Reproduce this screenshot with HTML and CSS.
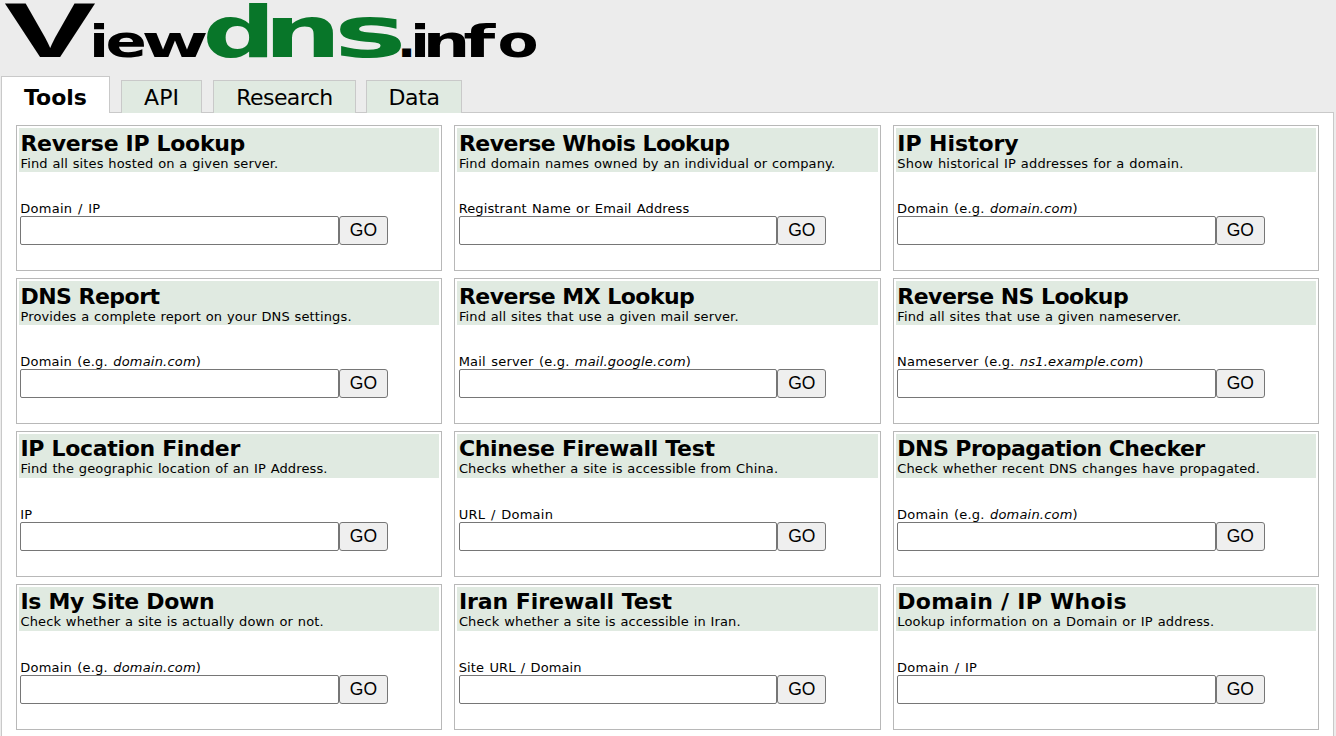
FILE: index.html
```html
<!DOCTYPE html>
<html lang="en">
<head>
<meta charset="utf-8">
<title>ViewDNS.info</title>
<link rel="stylesheet" href="styles.css">
</head>
<body>
<header class="masthead">
<svg class="logo" width="545" height="76" viewBox="0 0 545 76" role="img" aria-label="Viewdns.info">
<text class="logo-dark logo-initial" x="4" y="57" font-size="77" textLength="92" lengthAdjust="spacingAndGlyphs">V</text>
<text class="logo-dark" y="57" font-size="45"><tspan x="89.2" textLength="19.6" lengthAdjust="spacingAndGlyphs">i</tspan><tspan x="105.5" textLength="41.4" lengthAdjust="spacingAndGlyphs">e</tspan><tspan x="141.5" textLength="67" lengthAdjust="spacingAndGlyphs">w</tspan></text>
<text class="logo-green" y="57" font-size="72"><tspan x="202.4" textLength="73.2" lengthAdjust="spacingAndGlyphs">d</tspan><tspan x="263.8" textLength="77.7" lengthAdjust="spacingAndGlyphs">n</tspan><tspan x="333.7" textLength="73" lengthAdjust="spacingAndGlyphs">s</tspan></text>
<text class="logo-dark" y="57" font-size="45"><tspan x="397" textLength="19.2" lengthAdjust="spacingAndGlyphs">.</tspan><tspan x="410.2" textLength="19.6" lengthAdjust="spacingAndGlyphs">i</tspan><tspan x="422.4" textLength="47.9" lengthAdjust="spacingAndGlyphs">n</tspan><tspan x="463.3" textLength="32" lengthAdjust="spacingAndGlyphs">f</tspan><tspan x="497.4" textLength="41.1" lengthAdjust="spacingAndGlyphs">o</tspan></text>
</svg>
</header>
<nav class="tabs">
<a class="tab tab-active"><span class="tab-text">Tools</span></a>
<a class="tab tab-api"><span class="tab-text">API</span></a>
<a class="tab tab-research"><span class="tab-text">Research</span></a>
<a class="tab tab-data"><span class="tab-text">Data</span></a>
</nav>
<main class="panel">
<section class="card"><div class="head"><h2>Reverse IP Lookup</h2><p>Find all sites hosted on a given server.</p></div><form><label class="slashed">Domain / IP</label><div class="row"><input type="text"><button type="button">GO</button></div></form></section>
<section class="card"><div class="head"><h2 class="tight">Reverse Whois Lookup</h2><p>Find domain names owned by an individual or company.</p></div><form><label class="long">Registrant Name or Email Address</label><div class="row"><input type="text"><button type="button">GO</button></div></form></section>
<section class="card"><div class="head"><h2 class="normal">IP History</h2><p class="wide">Show historical IP addresses for a domain.</p></div><form><label>Domain (e.g. <i>domain.com</i>)</label><div class="row"><input type="text"><button type="button">GO</button></div></form></section>
<section class="card"><div class="head"><h2 class="tight">DNS Report</h2><p>Provides a complete report on your DNS settings.</p></div><form><label>Domain (e.g. <i>domain.com</i>)</label><div class="row"><input type="text"><button type="button">GO</button></div></form></section>
<section class="card"><div class="head"><h2 class="tight">Reverse MX Lookup</h2><p>Find all sites that use a given mail server.</p></div><form><label>Mail server (e.g. <i>mail.google.com</i>)</label><div class="row"><input type="text"><button type="button">GO</button></div></form></section>
<section class="card"><div class="head"><h2 class="tight">Reverse NS Lookup</h2><p>Find all sites that use a given nameserver.</p></div><form><label>Nameserver (e.g. <i>ns1.example.com</i>)</label><div class="row"><input type="text"><button type="button">GO</button></div></form></section>
<section class="card raised"><div class="head"><h2>IP Location Finder</h2><p>Find the geographic location of an IP Address.</p></div><form><label>IP</label><div class="row"><input type="text"><button type="button">GO</button></div></form></section>
<section class="card raised"><div class="head"><h2>Chinese Firewall Test</h2><p>Checks whether a site is accessible from China.</p></div><form><label class="slashed">URL / Domain</label><div class="row"><input type="text"><button type="button">GO</button></div></form></section>
<section class="card raised"><div class="head"><h2 class="tight">DNS Propagation Checker</h2><p>Check whether recent DNS changes have propagated.</p></div><form><label>Domain (e.g. <i>domain.com</i>)</label><div class="row"><input type="text"><button type="button">GO</button></div></form></section>
<section class="card raised"><div class="head"><h2>Is My Site Down</h2><p>Check whether a site is actually down or not.</p></div><form><label>Domain (e.g. <i>domain.com</i>)</label><div class="row"><input type="text"><button type="button">GO</button></div></form></section>
<section class="card raised"><div class="head"><h2 class="normal">Iran Firewall Test</h2><p>Check whether a site is accessible in Iran.</p></div><form><label class="long">Site URL / Domain</label><div class="row"><input type="text"><button type="button">GO</button></div></form></section>
<section class="card raised"><div class="head"><h2 class="loose">Domain / IP Whois</h2><p class="wide">Lookup information on a Domain or IP address.</p></div><form><label class="slashed">Domain / IP</label><div class="row"><input type="text"><button type="button">GO</button></div></form></section>
</main>
</body>
</html>
```
FILE: styles.css
```css
* { box-sizing: border-box; }
body {
  margin: 0;
  height: 736px;
  overflow: hidden;
  background: #ececec;
  color: #000;
  font-family: Verdana, "DejaVu Sans", sans-serif;
  font-size: 13px;
}
.masthead { height: 76px; }
.logo { display: block; overflow: visible; font-family: "DejaVu Sans", sans-serif; font-weight: bold; }
.logo-initial { font-family: "Liberation Sans", Arial, sans-serif; }
.logo-dark { fill: #000; }
.logo-green { fill: #087629; }
.tabs {
  display: flex;
  align-items: flex-end;
  height: 37px;
  margin: 0 2px 0 1px;
}
.tabs::after { content: ""; flex: 1; border-bottom: 1px solid #c9c9c9; }
.tab {
  height: 33px;
  margin-right: 11px;
  border: 1px solid #c9c9c9;
  border-bottom: 0;
  background: #e0eae1;
  font-size: 22px;
  line-height: 34px;
  text-align: center;
  white-space: nowrap;
  position: relative;
}
.tab::after {
  content: "";
  position: absolute;
  left: 100%;
  bottom: 0;
  width: 12px;
  height: 1px;
  background: #c9c9c9;
}
.tab-active { width: 109px; height: 37px; background: #fff; font-weight: bold; line-height: 41px; }
.tab-api { width: 81px; }
.tab-research { width: 143px; margin-right: 10px; letter-spacing: -0.55px; }
.tab-data { width: 96px; margin-right: 0; letter-spacing: -0.4px; }
.panel {
  display: grid;
  grid-template-columns: repeat(3, 426.15px);
  grid-auto-rows: 146px;
  gap: 7px 12.25px;
  height: 640px;
  margin: 0 2px 0 1px;
  padding: 12px 0 0 14px;
  background: #fff;
  border: solid #c9c9c9;
  border-width: 0 1px;
}
.card { border: 1px solid #b8b8b8; padding: 2px; }
.head { height: 44px; padding: 4px 0 0 1.5px; background: #e0eae1; white-space: nowrap; }
.raised .head { padding-top: 3px; }
h2 { margin: 0; font-size: 22px; line-height: 24px; letter-spacing: -0.32px; }
h2.tight { letter-spacing: -0.53px; }
h2.normal { letter-spacing: -0.05px; }
h2.loose { letter-spacing: 0.25px; }
p { margin: 0; font-size: 13px; line-height: 16px; letter-spacing: 0.125px; word-spacing: 0.5px; }
p.wide { letter-spacing: 0.185px; }
form { padding: 29px 0 0 1.3px; }
label { display: block; height: 15px; line-height: 15px; white-space: nowrap; letter-spacing: 0.2px; word-spacing: 1px; }
label.slashed { letter-spacing: 0.25px; word-spacing: 1.3px; }
label.long { letter-spacing: 0.12px; }
.row { display: flex; }
input {
  width: 318.7px;
  height: 29px;
  border: 1px solid #767676;
  border-radius: 2px;
  background: #fff;
}
button {
  width: 49px;
  height: 29px;
  padding: 0;
  border: 1px solid #767676;
  border-radius: 3px;
  background: #efefef;
  color: #000;
  font: 17.5px/25px "Liberation Sans", Arial, sans-serif;
}
```
